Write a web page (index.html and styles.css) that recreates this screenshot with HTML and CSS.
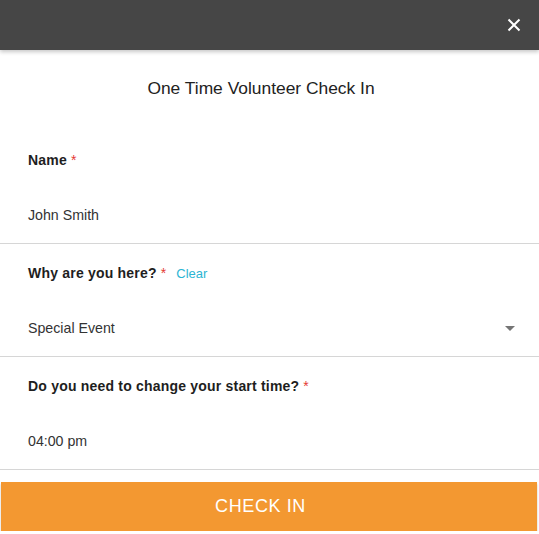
FILE: index.html
```html
<!DOCTYPE html>
<html lang="en">
<head>
<meta charset="utf-8">
<title>One Time Volunteer Check In</title>
<link rel="stylesheet" href="styles.css">
</head>
<body>
<header class="topbar">
  <button class="close" aria-label="Close">
    <svg width="14" height="14" viewBox="0 0 14 14"><path d="M1.5 1.5L12.5 12.5M12.5 1.5L1.5 12.5" stroke="#fff" stroke-width="2" fill="none"/></svg>
  </button>
</header>
<main class="form">
  <h1 class="title">One Time Volunteer Check In</h1>
  <div class="field">
    <div class="label">Name <span class="req">*</span></div>
    <div class="value">John Smith</div>
  </div>
  <div class="field">
    <div class="label">Why are you here? <span class="req">*</span><a class="clear">Clear</a></div>
    <div class="value select">Special Event<span class="arrow"></span></div>
  </div>
  <div class="field">
    <div class="label">Do you need to change your start time? <span class="req">*</span></div>
    <div class="value">04:00 pm</div>
  </div>
  <button class="checkin">CHECK IN</button>
</main>
</body>
</html>
```
FILE: styles.css
```css
* { box-sizing: border-box; }
body {
  margin: 0;
  font-family: "Liberation Sans", Arial, sans-serif;
  background: #fff;
  color: #222;
}
.topbar {
  height: 50px;
  background: #464646;
  box-shadow: 0 2px 4px rgba(0,0,0,0.22);
  display: flex;
  justify-content: flex-end;
  align-items: center;
  padding-right: 18px;
  position: relative;
  z-index: 1;
}
.close {
  background: none;
  border: 0;
  padding: 0;
  width: 14px;
  height: 14px;
  display: flex;
  cursor: pointer;
}
.title {
  margin: 0;
  padding: 26px 17px 31px 0;
  font-size: 17.4px;
  line-height: 24px;
  font-weight: normal;
  text-align: center;
  color: #222;
}
.field {
  padding: 19px 28px 18px;
  border-bottom: 1px solid #d6d6d6;
}
.label {
  height: 20px;
  font-size: 14px;
  line-height: 20px;
  font-weight: bold;
  color: #1e1e1e;
  letter-spacing: 0.2px;
  display: flex;
  align-items: baseline;
}
.req {
  color: #e53935;
  font-weight: normal;
  margin-left: 4px;
}
.clear {
  color: #2bb5d3;
  font-weight: normal;
  font-size: 13px;
  margin-left: 10px;
  letter-spacing: 0;
}
.value {
  margin-top: 35px;
  height: 20px;
  font-size: 14.2px;
  line-height: 20px;
  color: #333;
}
.select {
  display: flex;
  justify-content: space-between;
  align-items: center;
}
.arrow {
  width: 0;
  height: 0;
  border-left: 5px solid transparent;
  border-right: 5px solid transparent;
  border-top: 5px solid #757575;
  margin-right: -4px;
  margin-top: 1px;
}
.checkin {
  display: block;
  margin: 12px 2px 0 1px;
  width: 536px;
  height: 49px;
  border: 0;
  padding: 0 17px 0 0;
  background: #f39831;
  color: #fff;
  font-family: "Liberation Sans", Arial, sans-serif;
  font-size: 18px;
  letter-spacing: 0.6px;
  box-shadow: 0 2px 2px rgba(0,0,0,0.24);
  cursor: pointer;
}
```
